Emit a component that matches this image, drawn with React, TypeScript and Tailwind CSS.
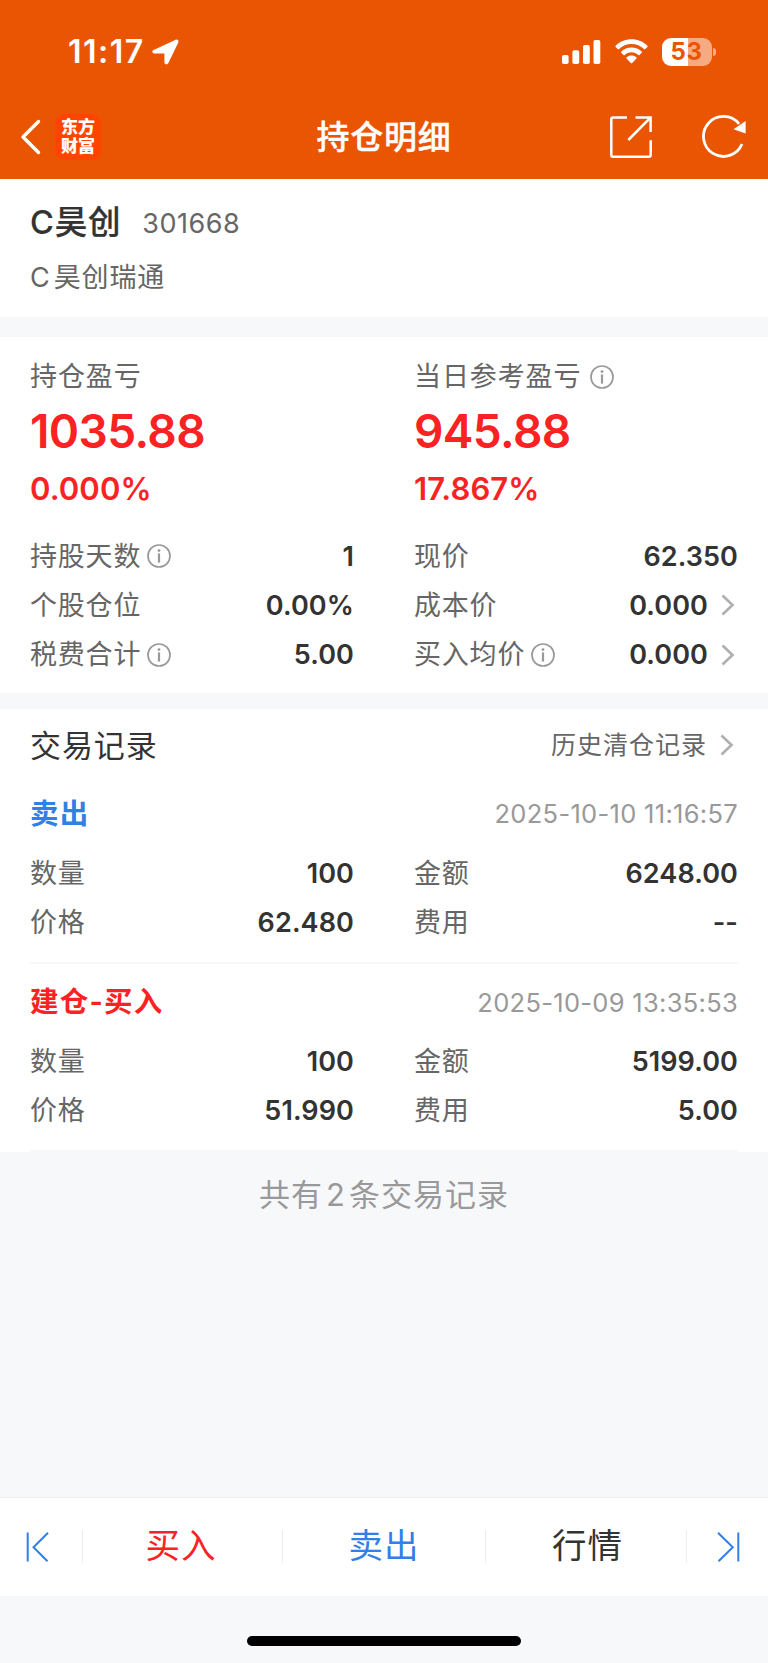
import React from 'react'

const InfoIcon = ({ className = '' }: { className?: string }) => (
  <svg className={`h-6 w-6 shrink-0 ${className}`} viewBox="0 0 24 24" fill="none">
    <circle cx="12" cy="12" r="11" stroke="#999999" strokeWidth="1.7" />
    <circle cx="12" cy="6.6" r="1.4" fill="#999999" />
    <path d="M12 9.4v9.2" stroke="#999999" strokeWidth="2.2" />
  </svg>
)

const Chevron = () => (
  <svg className="ml-[13px] mr-[3px] h-[22px] w-[14px] shrink-0" viewBox="0 0 14 22" fill="none">
    <path d="M1.5 1.5L11.5 11L1.5 20.5" stroke="#b0b0b0" strokeWidth="2.7" />
  </svg>
)

const StatusBar = () => (
  <div className="flex h-[103px] items-center pl-[68px] pr-[52px] text-white">
    <span className="text-[32px] font-semibold leading-none tracking-[1.5px]">11:17</span>
    <svg className="ml-[7px] h-[26px] w-[27px]" viewBox="0 0 27 26" fill="white">
      <path d="M1.6 11.1L23.2 0.9C25.4 -0.1 27.2 1.6 26.2 3.8L16.4 24C15.4 26 12.4 25.5 12.4 23.2V14.4H2.5C0.1 14.3 -0.5 12 1.6 11.1Z" />
    </svg>
    <svg className="ml-auto h-6 w-[39px]" viewBox="0 0 39 24" fill="white">
      <rect x="0" y="15" width="6.6" height="9" rx="1.8" />
      <rect x="10.4" y="10.3" width="6.8" height="13.7" rx="1.8" />
      <rect x="21" y="5" width="6.8" height="19" rx="1.8" />
      <rect x="31.5" y="0" width="6.8" height="24" rx="1.8" />
    </svg>
    <svg className="ml-[14px] h-[25px] w-[33px]" viewBox="0 0 33 25" fill="white">
      <path d="M16.5 0.3C22.7 0.3 28.3 2.7 32.4 6.7C32.8 7.1 32.8 7.6 32.4 8L30.3 10.1C29.9 10.5 29.4 10.5 29 10.1C25.7 7 21.3 5.1 16.5 5.1C11.7 5.1 7.3 7 4 10.1C3.6 10.5 3.1 10.5 2.7 10.1L0.6 8C0.2 7.6 0.2 7.1 0.6 6.7C4.7 2.7 10.3 0.3 16.5 0.3Z" />
      <path d="M16.5 8.5C20.4 8.5 24 10 26.7 12.4C27.1 12.8 27.1 13.3 26.7 13.7L24.5 15.9C24.1 16.3 23.6 16.3 23.2 15.9C21.4 14.3 19.1 13.3 16.5 13.3C13.9 13.3 11.6 14.3 9.8 15.9C9.4 16.3 8.9 16.3 8.5 15.9L6.3 13.7C5.9 13.3 5.9 12.8 6.3 12.4C9 10 12.6 8.5 16.5 8.5Z" />
      <path d="M16.5 16.6C18.3 16.6 20 17.2 21.3 18.2C21.8 18.6 21.8 19.2 21.4 19.6L17.2 23.9C16.8 24.3 16.2 24.3 15.8 23.9L11.6 19.6C11.2 19.2 11.2 18.6 11.7 18.2C13 17.2 14.7 16.6 16.5 16.6Z" />
    </svg>
    <div className="ml-[14px] flex h-7 w-[50px] items-center justify-center rounded-[9px] bg-[linear-gradient(90deg,#fff_53%,#f5aa81_53%)] text-[24px] font-bold leading-none tracking-[0.5px]">
      <span className="text-[#ea5504]">5</span>
      <span className="text-[#ea5504]">3</span>
    </div>
    <div className="ml-[1.5px] h-2 w-[3px] rounded-r-full bg-[#f5aa81]" />
  </div>
)

const NavBar = () => (
  <div className="flex h-[76px] items-center pb-[9px] pl-5 pr-[22px] text-white">
    <div className="flex flex-1 items-center">
      <svg className="h-[36px] w-[22px]" viewBox="0 0 22 36" fill="none">
        <path d="M18.5 2.5L3 18L18.5 33.5" stroke="white" strokeWidth="3.4" strokeLinecap="round" strokeLinejoin="round" />
      </svg>
      <div className="ml-[13px] flex h-[46px] w-[46px] flex-col items-center justify-center rounded-[9px] bg-[#ff4400] text-[17px] font-black leading-[19px]">
        <span>东方</span>
        <span>财富</span>
      </div>
    </div>
    <h1 className="ml-[2px] mt-px text-[33px] font-medium leading-none tracking-[0.8px] [-webkit-text-stroke:0.4px_white]">持仓明细</h1>
    <div className="flex flex-1 items-center justify-end">
      <svg className="mt-px h-[42px] w-[42px]" viewBox="0 0 42 42" fill="none" stroke="white" strokeWidth="2.5">
        <path d="M17 1.5H3Q1.3 1.5 1.3 3.2V39Q1.3 40.7 3 40.7H39Q40.7 40.7 40.7 39V24.3" />
        <path d="M25.5 1.5H40.6V16" />
        <path d="M40 2.2L18.3 24" />
      </svg>
      <svg className="ml-[50px] h-[43px] w-[44px]" viewBox="0 0 44 43" fill="none">
        <path d="M40 29A20 20 0 1 1 37 8.8" stroke="white" strokeWidth="2.8" />
        <path d="M43.6 6V18.4L31.5 14.2Z" fill="white" />
      </svg>
    </div>
  </div>
)

type CellProps = { label: string; value: string; info?: boolean; link?: boolean }

const Cell = ({ label, value, info, link }: CellProps) => (
  <div className="flex h-[49.2px] items-center">
    <span className="text-[27px] tracking-[0.8px] text-[#666666]">{label}</span>
    {info && <InfoIcon className="ml-[5.5px]" />}
    <span className="ml-auto text-[27px] font-semibold tracking-[0.1px] text-[#333333]">{value}</span>
    {link && <Chevron />}
  </div>
)

const CellGrid = ({ cells }: { cells: CellProps[] }) => (
  <div className="grid grid-cols-2 gap-x-[60px]">
    {cells.map((cell) => <Cell key={cell.label} {...cell} />)}
  </div>
)

const Profit = ({ label, amount, rate, info }: { label: string; amount: string; rate: string; info?: boolean }) => (
  <div>
    <div className="flex h-[55px] items-center text-[27px] tracking-[0.9px] text-[#666666]">
      {label}
      {info && <InfoIcon className="ml-[9px]" />}
    </div>
    <div className="flex h-[54px] items-center text-[46px] font-semibold tracking-[-0.6px]">{amount}</div>
    <div className="flex h-[60px] items-center text-[31px] font-semibold tracking-[0.1px]">{rate}</div>
  </div>
)

const positionCells: CellProps[] = [
  { label: '持股天数', value: '1', info: true },
  { label: '现价', value: '62.350' },
  { label: '个股仓位', value: '0.00%' },
  { label: '成本价', value: '0.000', link: true },
  { label: '税费合计', value: '5.00', info: true },
  { label: '买入均价', value: '0.000', info: true, link: true },
]

const records = [
  {
    type: '卖出',
    color: 'text-[#2f80e7]',
    time: '2025-10-10 11:16:57',
    cells: [
      { label: '数量', value: '100' },
      { label: '金额', value: '6248.00' },
      { label: '价格', value: '62.480' },
      { label: '费用', value: '--' },
    ],
  },
  {
    type: '建仓-买入',
    color: 'text-[#fa2222]',
    time: '2025-10-09 13:35:53',
    cells: [
      { label: '数量', value: '100' },
      { label: '金额', value: '5199.00' },
      { label: '价格', value: '51.990' },
      { label: '费用', value: '5.00' },
    ],
  },
]

const BottomBar = () => (
  <div className="flex h-[99px] items-center border-t border-[#eeeff1] bg-white pb-px text-[34.5px] tracking-[1px]">
    <div className="flex h-[33px] w-[83px] items-center border-r border-[#eeeeee] pl-[26px]">
      <svg className="h-[30px] w-[24px]" viewBox="0 0 24 30" fill="none" stroke="#2f80e7" strokeWidth="2">
        <path d="M1.7 0.5V29.5M22 0.8L7.5 15.2L21.5 29.3" />
      </svg>
    </div>
    <div className="flex h-[33px] w-[200px] items-center justify-center border-r border-[#eeeeee] pr-[3px] text-[#fa2222]">买入</div>
    <div className="flex h-[33px] w-[203px] items-center justify-center border-r border-[#eeeeee] text-[#2f80e7]">卖出</div>
    <div className="flex h-[33px] w-[201px] items-center justify-center border-r border-[#eeeeee] pl-[3px] text-[#333333]">行情</div>
    <div className="flex h-[33px] flex-1 items-center pl-[29px]">
      <svg className="h-[30px] w-[24px]" viewBox="0 0 24 30" fill="none" stroke="#2f80e7" strokeWidth="2">
        <path d="M22.3 0.5V29.5M2 0.8L16.8 15.2L2.5 29.3" />
      </svg>
    </div>
  </div>
)

const App = () => {
  return (
    <div className="flex h-[1663px] w-[768px] flex-col bg-[#f7f8fa] font-['Inter','Noto_Sans_CJK_SC',sans-serif] leading-none whitespace-nowrap">
      <header className="h-[179px] bg-[#ea5504]">
        <StatusBar />
        <NavBar />
      </header>

      <section className="h-[138px] bg-white px-[30px] pt-5">
        <div className="flex h-12 items-center">
          <span className="text-[32.5px] font-medium tracking-[0.8px] text-[#333333] [-webkit-text-stroke:0.2px_#333333]">C昊创</span>
          <span className="ml-[21px] text-[27px] tracking-[0.5px] text-[#666666]">301668</span>
        </div>
        <div className="flex h-[60px] items-center text-[27px] tracking-[0.9px] text-[#666666]">
          <span className="mr-[3px]">C</span>昊创瑞通
        </div>
      </section>

      <section className="mt-5 h-[356px] bg-white px-[30px] pt-3">
        <div className="mb-[13.6px] grid grid-cols-2 gap-x-[60px] text-[#fa2222]">
          <Profit label="持仓盈亏" amount="1035.88" rate="0.000%" />
          <Profit label="当日参考盈亏" amount="945.88" rate="17.867%" info />
        </div>
        <CellGrid cells={positionCells} />
      </section>

      <section className="mt-4 h-[443px] bg-white px-[30px]">
        <div className="flex h-[66px] items-center justify-between pt-[6px]">
          <h2 className="text-[31px] tracking-[0.9px] text-[#333333]">交易记录</h2>
          <div className="mr-px flex items-center text-[25px] tracking-[1px] text-[#666666]">
            历史清仓记录
            <Chevron />
          </div>
        </div>
        {records.map((record) => (
          <div key={record.time} className="h-[188.7px] border-b-2 border-[#f7f7f8]">
            <div className="flex h-[73.5px] items-center justify-between pt-1">
              <span className={`text-[28.5px] font-bold tracking-[1.2px] ${record.color}`}>{record.type}</span>
              <span className="text-[25.5px] tracking-[0.3px] text-[#999999]">{record.time}</span>
            </div>
            <CellGrid cells={record.cells} />
          </div>
        ))}
      </section>

      <div className="mt-[27px] text-center text-[31px] leading-[32px] tracking-[1px] text-[#999999]">
        共有<span className="mx-[3px]">2</span>条交易记录
      </div>

      <footer className="mt-auto">
        <BottomBar />
        <div className="flex h-[67px] justify-center pt-[40px]">
          <div className="h-[10px] w-[274px] rounded-full bg-black" />
        </div>
      </footer>
    </div>
  )
}

export default App
